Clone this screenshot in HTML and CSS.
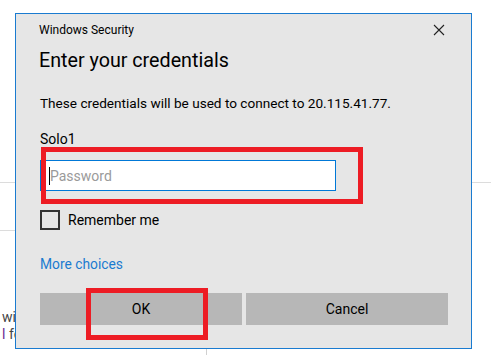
FILE: index.html
```html
<!DOCTYPE html>
<html lang="en">
<head>
  <meta charset="UTF-8">
  <title>Windows Security</title>
  <link rel="stylesheet" href="styles.css">
</head>
<body>

<div class="backdrop">
  <div class="rule rule-top"></div>
  <div class="rule rule-short"></div>
  <div class="page-text">
    <div class="page-line">with</div>
    <div class="page-line"><span class="visited">l</span> for</div>
  </div>
  <div class="rule-vertical"></div>
</div>

<div class="dialog">
  <div class="dialog-header">
    <span class="dialog-caption">Windows Security</span>
    <button class="close-button" title="Close">
      <svg width="12" height="12" viewBox="0 0 12 12">
        <path d="M1 1 L11 11 M11 1 L1 11" stroke="#222" stroke-width="1.1" fill="none"/>
      </svg>
    </button>
  </div>

  <h1 class="dialog-title">Enter your credentials</h1>
  <p class="dialog-message">These credentials will be used to connect to 20.115.41.77.</p>

  <div class="user-name">Solo1</div>
  <div class="password-field">
    <span class="caret"></span>
    <span class="placeholder">Password</span>
  </div>

  <label class="remember">
    <span class="checkbox"></span>
    <span>Remember me</span>
  </label>

  <a class="more-choices" href="#">More choices</a>

  <div class="dialog-buttons">
    <button class="dialog-button">OK</button>
    <button class="dialog-button">Cancel</button>
  </div>

  <!-- annotation boxes drawn over the screenshot -->
  <div class="mark mark-password"></div>
  <div class="mark mark-ok"></div>
</div>

</body>
</html>
```

FILE: styles.css
```css
body {
  margin: 0;
  width: 491px;
  height: 355px;
  overflow: hidden;
  position: relative;
  background: #fff;
  font-family: Roboto, 'Noto Sans', sans-serif;
  color: #000;
}
.backdrop {
  padding-top: 182px;
}
.rule {
  height: 1px;
  background: #dcdcdc;
}
.rule-short {
  width: 20px;
  margin-top: 47px;
}
.page-text {
  margin-top: 78px;
  padding-left: 2px;
  font-size: 14px;
  line-height: 17px;
  color: #444;
}
.visited {
  color: #6a2c91;
}
.rule-vertical {
  margin-left: 206px;
  width: 1px;
  height: 20px;
  background: #d0d0d0;
}
.dialog {
  position: absolute;
  top: 13px;
  left: 15px;
  width: 408px;
  padding: 0 23px 23px 24px;
  background: #e6e6e6;
  border: 1px solid #1a7bd0;
}
.dialog-header {
  display: flex;
  align-items: center;
  justify-content: space-between;
  height: 33px;
}
.dialog-caption {
  font-size: 12px;
  margin-left: -1px;
  margin-top: -1px;
}
.close-button {
  background: transparent;
  border: none;
  padding: 0;
  margin-right: 3px;
  margin-top: -2px;
  display: flex;
}
.dialog-title {
  margin: 0;
  font-size: 19.7px;
  font-weight: normal;
  line-height: 28px;
  margin-left: -1px;
}
.dialog-message {
  margin: 18px 0 0;
  font-size: 13.6px;
  line-height: 20px;
}
.user-name {
  margin-top: 16px;
  font-size: 14px;
  line-height: 20px;
}
.password-field {
  margin-top: 11px;
  width: 286px;
  height: 29px;
  border: 1px solid #0078d7;
  background: #fff;
  display: flex;
  align-items: center;
  padding-left: 8px;
}
.caret {
  width: 1px;
  height: 18px;
  background: #000;
}
.placeholder {
  color: #9a9a9a;
  font-size: 14px;
}
.remember {
  margin-top: 19px;
  display: flex;
  align-items: center;
  gap: 8px;
  font-size: 14px;
  height: 20px;
}
.checkbox {
  width: 16px;
  height: 16px;
  border: 2px solid #333;
}
.more-choices {
  display: block;
  margin-top: 24px;
  font-size: 13.8px;
  line-height: 20px;
  color: #1a7bd0;
  text-decoration: none;
  width: max-content;
}
.dialog-buttons {
  margin-top: 19px;
  display: flex;
  gap: 4px;
}
.dialog-button {
  flex: 1;
  height: 32px;
  border: none;
  background: #b7b7b7;
  font-family: inherit;
  font-size: 14px;
  color: #000;
  padding: 0;
}
.mark {
  position: absolute;
  border: 5px solid #ed1c24;
  box-sizing: border-box;
}
.mark-password {
  left: 25px;
  top: 133px;
  width: 322px;
  height: 57px;
}
.mark-ok {
  left: 70px;
  top: 274px;
  width: 122px;
  height: 52px;
}
```
